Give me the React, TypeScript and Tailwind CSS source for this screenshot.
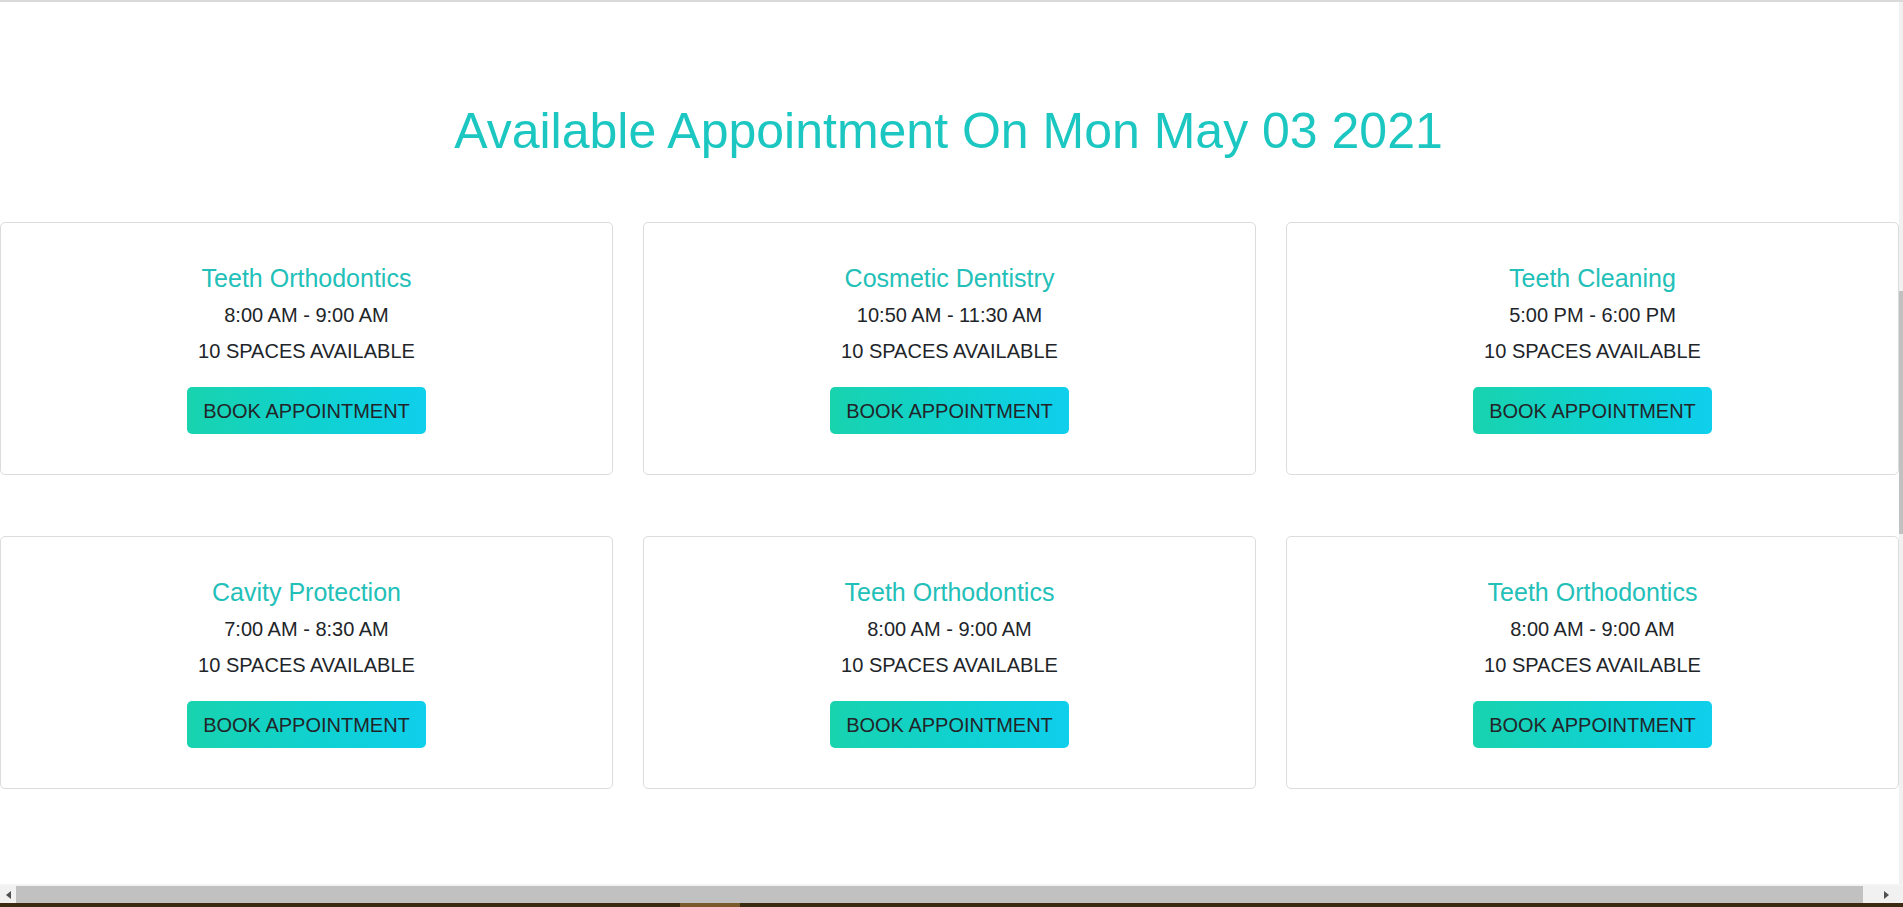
const SLOTS = [
  { name: 'Teeth Orthodontics', time: '8:00 AM - 9:00 AM' },
  { name: 'Cosmetic Dentistry', time: '10:50 AM - 11:30 AM' },
  { name: 'Teeth Cleaning', time: '5:00 PM - 6:00 PM' },
  { name: 'Cavity Protection', time: '7:00 AM - 8:30 AM' },
  { name: 'Teeth Orthodontics', time: '8:00 AM - 9:00 AM' },
  { name: 'Teeth Orthodontics', time: '8:00 AM - 9:00 AM' },
];

const AppointmentCard = ({ slot }: { slot: { name: string; time: string } }) => (
  <div className="h-[253px] border border-[#dcdcdc] rounded-[5px] bg-white flex flex-col items-center pt-[40px] pb-[40px]">
    <h4 className="text-[25px] leading-[30px] text-[#22c0b8]">{slot.name}</h4>
    <h6 className="mt-[10px] text-[20px] leading-[24px] text-[#212529]">{slot.time}</h6>
    <p className="mt-[12px] text-[20px] leading-[24px] text-[#212529]">10 SPACES AVAILABLE</p>
    <button className="mt-[24px] h-[47px] px-[16px] rounded-[5px] text-[20px] leading-[24px] text-[#212529] bg-gradient-to-r from-[#19d3ae] to-[#0fcfec]">
      BOOK APPOINTMENT
    </button>
  </div>
);

const Arrow = ({ dir }: { dir: 'left' | 'right' }) => (
  <svg width="5" height="8" viewBox="0 0 5 8">
    <path d={dir === 'left' ? 'M5 0 L0 4 L5 8 Z' : 'M0 0 L5 4 L0 8 Z'} fill="#505050" />
  </svg>
);

export default function App() {
  return (
    <div
      className="w-[1903px] h-[907px] overflow-hidden flex flex-col bg-white"
      style={{ fontFamily: '"Liberation Sans", Arial, sans-serif' }}
    >
      <div className="h-[2px] bg-[#dadada]" />
      <div className="flex-1 flex min-h-0">
        <div className="flex-1 min-w-0 pt-[99px]">
          <h1 className="w-[1897px] text-center text-[50px] leading-[60px] text-[#1cc7c1]">
            Available Appointment On Mon May 03 2021
          </h1>
          <div className="mt-[61px] grid grid-cols-[613px_613px_613px] gap-x-[30px] gap-y-[61px]">
            {SLOTS.map((slot, i) => (
              <AppointmentCard key={`slot-${i}`} slot={slot} />
            ))}
          </div>
        </div>
        <div className="w-[4px] bg-[#f1f1f1] flex flex-col">
          <div className="h-[289px]" />
          <div className="h-[243px] bg-[#c1c1c1]" />
        </div>
      </div>
      <div className="h-[2px] bg-[#f4f4f4]" />
      <div className="h-[17px] flex bg-[#f1f1f1]">
        <div className="w-[16px] flex items-center justify-center">
          <Arrow dir="left" />
        </div>
        <div className="flex-1 bg-[#c1c1c1]" />
        <div className="w-[40px] flex items-center justify-end pr-[14px]">
          <Arrow dir="right" />
        </div>
      </div>
      <div className="h-[4px] flex bg-[#3a2a12]">
        <div className="w-[680px]" />
        <div className="w-[60px] bg-[#7a5a2a]" />
      </div>
    </div>
  );
}
